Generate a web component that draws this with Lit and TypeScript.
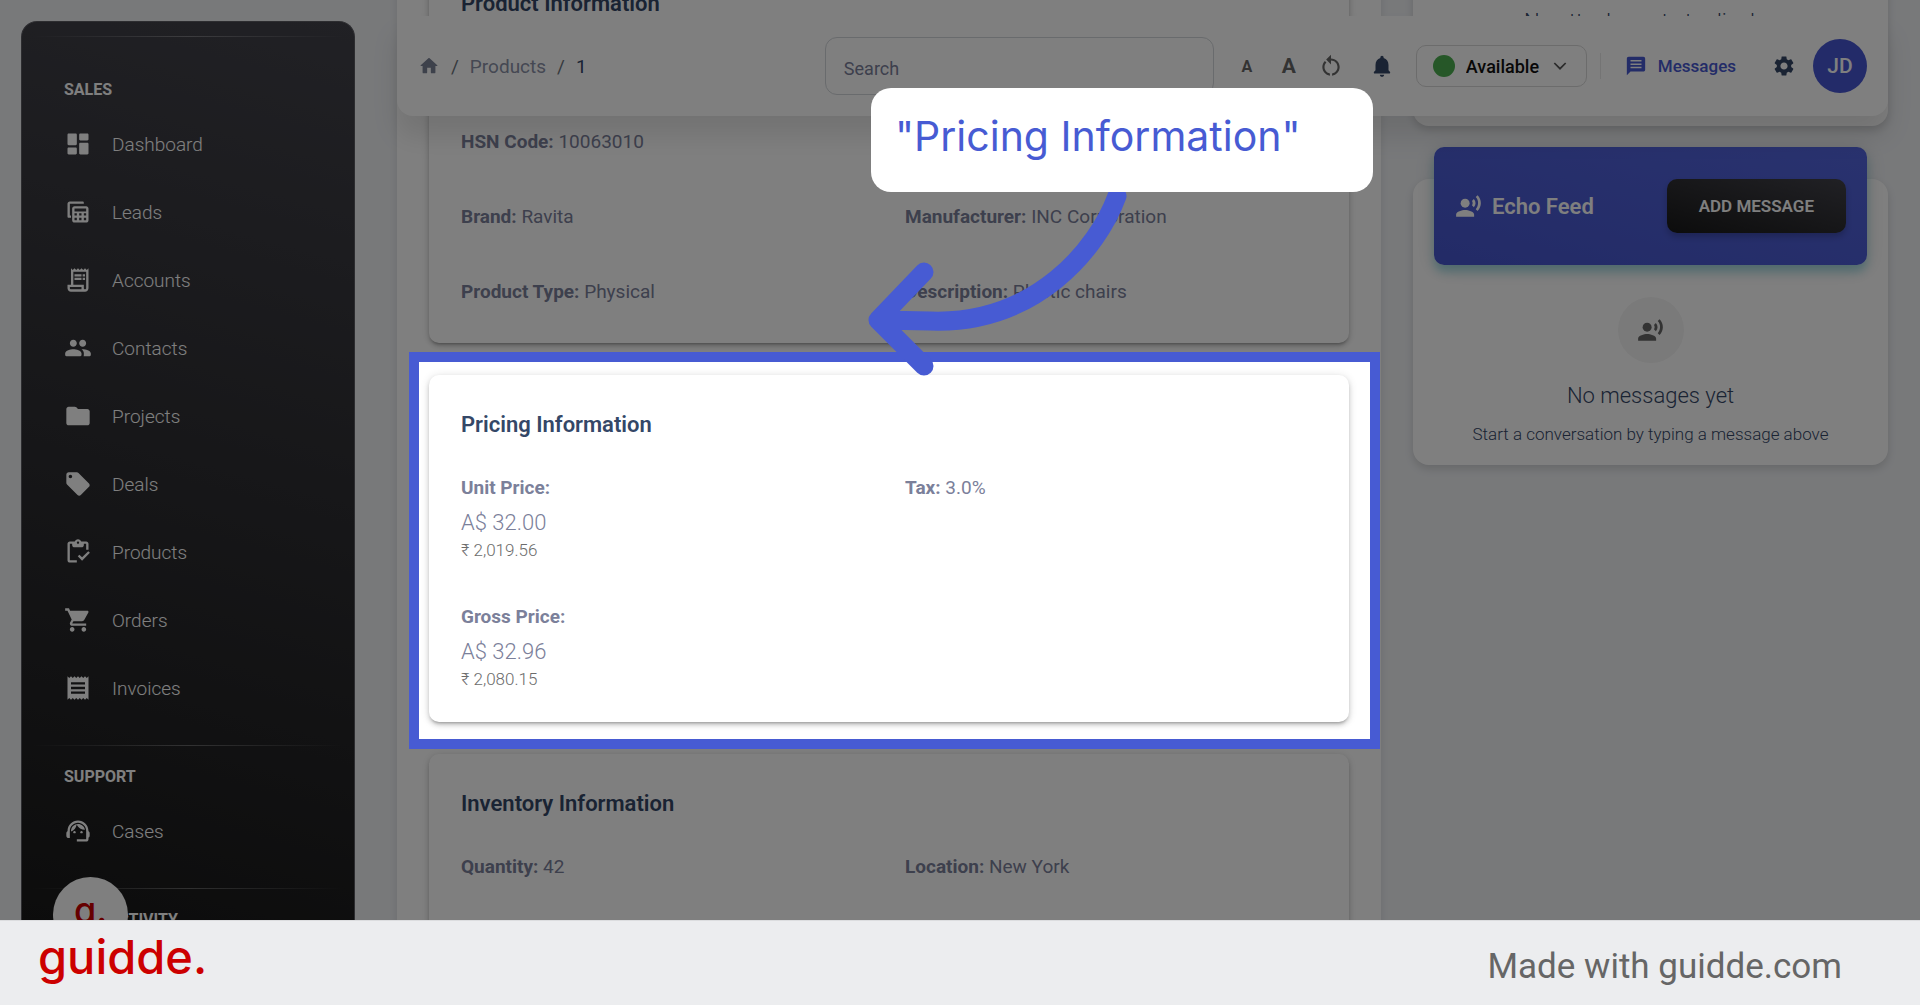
import { LitElement, html, css, svg, nothing } from "lit";
import { customElement } from "lit/decorators.js";

const ICONS: Record<string, unknown> = {
  dashboard: svg`<path d="M4 13h6c.55 0 1-.45 1-1V4c0-.55-.45-1-1-1H4c-.55 0-1 .45-1 1v8c0 .55.45 1 1 1zm0 8h6c.55 0 1-.45 1-1v-4c0-.55-.45-1-1-1H4c-.55 0-1 .45-1 1v4c0 .55.45 1 1 1zm10 0h6c.55 0 1-.45 1-1v-8c0-.55-.45-1-1-1h-6c-.55 0-1 .45-1 1v8c0 .55.45 1 1 1zM13 4v4c0 .55.45 1 1 1h6c.55 0 1-.45 1-1V4c0-.55-.45-1-1-1h-6c-.55 0-1 .45-1 1z"/>`,
  leads: svg`<path d="M17 5V4c0-.55-.45-1-1-1H5c-1.100 0-2 .9-2 2v11c0 .55.45 1 1 1h2v-2H5V5z"/><path fill-rule="evenodd" d="M9 7h10c1.100 0 2 .9 2 2v10c0 1.100-.9 2-2 2H9c-1.100 0-2-.9-2-2V9c0-1.100.9-2 2-2zm0 2v2.500h10V9zm0 4v2h2v-2zm4 0v2h2v-2zm4 0v2h2v-2zm-8 4v2h2v-2zm4 0v2h2v-2zm4 0v2h2v-2z"/>`,
  accounts: svg`<path d="M19.500 3.500 18 2l-1.500 1.500L15 2l-1.500 1.500L12 2l-1.500 1.500L9 2 7.500 3.500 6 2v14H3v3c0 1.660 1.340 3 3 3h12c1.660 0 3-1.340 3-3V2l-1.500 1.500zM15 20H6c-.55 0-1-.45-1-1v-1h10v2zm4-1c0 .55-.45 1-1 1s-1-.45-1-1v-3H8V5h11v14z"/><path d="M9 7h6v2H9zM16 7h2v2h-2zM9 10h6v2H9zM16 10h2v2h-2z"/>`,
  contacts: svg`<path d="M16 11c1.660 0 2.990-1.340 2.990-3S17.660 5 16 5s-3 1.340-3 3 1.340 3 3 3zm-8 0c1.660 0 2.990-1.340 2.990-3S9.660 5 8 5 5 6.340 5 8s1.340 3 3 3zm0 2c-2.330 0-7 1.170-7 3.500V18c0 .55.45 1 1 1h12c.55 0 1-.45 1-1v-1.500c0-2.330-4.670-3.500-7-3.500zm8 0c-.29 0-.62.020-.97.050 1.160.84 1.970 1.970 1.970 3.450V18c0 .35-.07.69-.18 1H22c.55 0 1-.45 1-1v-1.500c0-2.330-4.670-3.500-7-3.500z"/>`,
  projects: svg`<path d="M10.590 4.590C10.210 4.210 9.700 4 9.170 4H4c-1.100 0-1.990.9-1.990 2L2 18c0 1.100.9 2 2 2h16c1.100 0 2-.9 2-2V8c0-1.100-.9-2-2-2h-8l-1.410-1.410z"/>`,
  deals: svg`<path d="m21.410 11.580-9-9C12.050 2.220 11.550 2 11 2H4c-1.100 0-2 .9-2 2v7c0 .55.220 1.050.59 1.420l9 9c.36.36.86.58 1.410.58s1.050-.22 1.410-.59l7-7c.37-.36.59-.86.59-1.410s-.23-1.060-.59-1.420zM5.500 7C4.670 7 4 6.330 4 5.500S4.670 4 5.500 4 7 4.670 7 5.500 6.330 7 5.500 7z"/>`,
  products: svg`<path d="M5 5h2v1c0 1.100.9 2 2 2h6c1.100 0 2-.9 2-2V5h2v5h2V5c0-1.100-.9-2-2-2h-4.180C14.400 1.840 13.300 1 12 1s-2.400.84-2.820 2H5c-1.100 0-2 .9-2 2v14c0 1.100.9 2 2 2h6v-2H5V5zm7-2c.55 0 1 .45 1 1s-.45 1-1 1-1-.45-1-1 .45-1 1-1z"/><path d="M20.800 11.300 15.500 16.600l-2.300-2.300-1.400 1.400 3.700 3.700 6.700-6.700z"/>`,
  orders: svg`<path d="M7 18c-1.100 0-1.990.9-1.990 2S5.900 22 7 22s2-.9 2-2-.9-2-2-2zM1 2v2h2l3.600 7.590-1.350 2.450c-.16.28-.25.61-.25.96 0 1.100.9 2 2 2h12v-2H7.420c-.14 0-.25-.11-.25-.25l.03-.12.9-1.630h7.450c.75 0 1.410-.41 1.750-1.030l3.580-6.490c.08-.14.12-.31.12-.48 0-.55-.45-1-1-1H5.210l-.94-2H1zm16 16c-1.100 0-1.990.9-1.990 2s.89 2 1.990 2 2-.9 2-2-.9-2-2-2z"/>`,
  invoices: svg`<path d="M18 17H6v-2h12v2zm0-4H6v-2h12v2zm0-4H6V7h12v2zM3 22l1.500-1.500L6 22l1.500-1.500L9 22l1.500-1.500L12 22l1.500-1.500L15 22l1.500-1.500L18 22l1.500-1.500L21 22V2l-1.500 1.500L18 2l-1.500 1.500L15 2l-1.500 1.500L12 2l-1.500 1.500L9 2 7.500 3.500 6 2 4.500 3.500 3 2v20z"/>`,
  cases: svg`<path d="M21 12.220C21 6.730 16.740 3 12 3c-4.690 0-9 3.650-9 9.280-.6.340-1 .98-1 1.720v2c0 1.100.9 2 2 2h1v-6.100c0-3.870 3.130-7 7-7s7 3.130 7 7V19h-8v2h8c1.100 0 2-.9 2-2v-1.220c.59-.31 1-.92 1-1.640v-2.300c0-.7-.41-1.310-1-1.620z"/><circle cx="9" cy="13" r="1"/><circle cx="15" cy="13" r="1"/><path d="M18 11.030C17.520 8.180 15.040 6 12.050 6c-3.030 0-6.290 2.510-6.030 6.450 2.470-1.010 4.330-3.210 4.860-5.890 1.310 2.630 4 4.440 7.120 4.470z"/>`,
  home: svg`<path d="M10 19v-5h4v5c0 .55.45 1 1 1h3c.55 0 1-.45 1-1v-7h1.700c.46 0 .68-.57.33-.87L12.670 3.600c-.38-.34-.96-.34-1.340 0l-8.360 7.530c-.34.3-.13.87.33.87H5v7c0 .55.45 1 1 1h3c.55 0 1-.45 1-1z"/>`,
  reset: svg`<path d="M12 5V1.500L7.500 6l4.500 4.500V7c3.300 0 6 2.700 6 6 0 2.970-2.170 5.430-5 5.910v2.020c3.950-.49 7-3.850 7-7.930 0-4.420-3.580-8-8-8zM6 13c0-1.650.67-3.150 1.760-4.240L6.340 7.340C4.900 8.790 4 10.790 4 13c0 4.080 3.050 7.440 7 7.930v-2.020c-2.830-.48-5-2.940-5-5.910z"/>`,
  bell: svg`<path d="M12 22c1.100 0 2-.9 2-2h-4c0 1.100.89 2 2 2zm6-6v-5c0-3.070-1.640-5.640-4.500-6.320V4c0-.83-.67-1.500-1.500-1.500s-1.500.67-1.500 1.500v.68C7.630 5.360 6 7.920 6 11v5l-1.300 1.290c-.63.63-.19 1.710.7 1.710h13.170c.89 0 1.340-1.080.71-1.710L18 16z"/>`,
  message: svg`<path fill-rule="evenodd" d="M4 2h16c1.100 0 2 .9 2 2v12c0 1.100-.9 2-2 2H6l-4 4V4c0-1.100.9-2 2-2zm2 3.500v1.700h12V5.500zm0 3.700v1.600h12V9.200zm0 3.600v1.700h12v-1.700z"/>`,
  gear: svg`<path d="M19.140 12.940c.04-.3.06-.61.06-.94 0-.32-.02-.64-.07-.94l2.030-1.580c.18-.14.23-.41.12-.61l-1.920-3.320c-.12-.22-.37-.29-.59-.22l-2.390.96c-.5-.38-1.030-.7-1.620-.94L14.400 2.810c-.04-.24-.24-.41-.48-.41h-3.840c-.24 0-.43.170-.47.410L9.250 5.350C8.660 5.590 8.120 5.920 7.630 6.290L5.240 5.330c-.22-.08-.47 0-.59.220L2.740 8.870c-.12.210-.08.470.12.610l2.030 1.580C4.840 11.360 4.800 11.690 4.800 12s.02.640.07.940l-2.030 1.580c-.18.14-.23.410-.12.610l1.920 3.320c.12.220.37.290.59.220l2.390-.96c.5.380 1.030.7 1.620.94l.36 2.540c.05.240.24.410.48.410h3.840c.24 0 .44-.170.47-.410l.36-2.540c.59-.24 1.130-.56 1.620-.94l2.390.96c.22.080.47 0 .59-.220l1.920-3.320c.12-.220.07-.470-.12-.610l-2.010-1.580zM12 15.600c-1.980 0-3.600-1.620-3.600-3.600s1.620-3.600 3.600-3.600 3.600 1.620 3.600 3.600-1.620 3.600-3.600 3.600z"/>`,
  chevron: svg`<path d="M3.500 7.500 12 16l8.500-8.500" fill="none" stroke="currentColor" stroke-width="2.600"/>`,
  voice: svg`<circle cx="9" cy="9" r="4"/><path d="M9 15c-2.670 0-8 1.340-8 4v2h16v-2c0-2.660-5.330-4-8-4zM16.760 5.360l-1.680 1.690c.84 1.180.84 2.710 0 3.890l1.680 1.690c2.020-2.020 2.020-5.070 0-7.270zM20.070 2l-1.630 1.630c2.770 3.020 2.770 7.560 0 10.740L20.070 16c3.900-3.890 3.910-9.950 0-14z"/>`,
};

const icon = (name: string, cls = "icon") =>
  html`<svg class=${cls} viewBox="0 0 24 24" fill="currentColor" aria-hidden="true">${ICONS[name]}</svg>`;

const SECTIONS = [
  {
    title: "Sales",
    items: [
      ["dashboard", "Dashboard"],
      ["leads", "Leads"],
      ["accounts", "Accounts"],
      ["contacts", "Contacts"],
      ["projects", "Projects"],
      ["deals", "Deals"],
      ["products", "Products"],
      ["orders", "Orders"],
      ["invoices", "Invoices"],
    ],
  },
  { title: "Support", items: [["cases", "Cases"]] },
  { title: "User Activity", items: [] },
];

const field = (label: string, value: string) =>
  html`<div class="field"><dt>${label}:</dt> <dd>${value}</dd></div>`;

const blank = () => html`<div class="field"></div>`;

const price = (label: string, amount: string, converted: string) => html`
  <div class="field price">
    <dt>${label}:</dt>
    <dd class="amount">${amount}</dd>
    <dd class="converted">${converted}</dd>
  </div>
`;

@customElement("app-sidebar")
export class AppSidebar extends LitElement {
  static styles = css`
    :host {
      display: block;
      box-sizing: border-box;
      padding-top: 14px;
      border-radius: 16px 16px 0 0;
      border: 1px solid #5a5a60;
      border-bottom: 0;
      background: linear-gradient(195deg, #42424a, #191919);
      color: #fff;
    }
    .rule {
      height: 1px;
      margin: 23px 10px 21px;
      border: 0;
      background: linear-gradient(90deg, transparent, rgba(255, 255, 255, 0.3), transparent);
    }
    .section:first-child .rule {
      margin: 0 10px 43px;
    }
    h2 {
      margin: 0 0 10px;
      padding-left: 42px;
      font-size: 16px;
      line-height: 20px;
      font-weight: 700;
      text-transform: uppercase;
    }
    ul {
      margin: 0;
      padding: 0;
      list-style: none;
    }
    a {
      display: flex;
      align-items: center;
      gap: 20px;
      height: 68px;
      padding-left: 42px;
      color: inherit;
      font-size: 19px;
      font-weight: 300;
      text-decoration: none;
    }
    .icon {
      width: 28px;
      height: 28px;
    }
  `;

  render() {
    return html`
      ${SECTIONS.map(
        (s) => html`<section class="section">
          <hr class="rule" />
          <h2>${s.title}</h2>
          ${s.items.length
            ? html`<ul>
                ${s.items.map(([i, label]) => html`<li><a href="#">${icon(i)}${label}</a></li>`)}
              </ul>`
            : nothing}
        </section>`,
      )}
    `;
  }
}

@customElement("app-topbar")
export class AppTopbar extends LitElement {
  static styles = css`
    :host {
      display: flex;
      align-items: center;
      box-sizing: border-box;
      height: 100px;
      padding: 0 21px;
      border-radius: 0 0 16px 16px;
      background: #fff;
      box-shadow: 0 20px 27px rgba(0, 0, 0, 0.1);
      color: #344767;
      font-size: 18px;
    }
    .crumbs {
      display: flex;
      align-items: center;
      gap: 11px;
      flex: 1;
      color: #6c757d;
      font-size: 19px;
    }
    .crumbs a {
      display: flex;
      color: #8a90a6;
      text-decoration: none;
    }
    .here {
      color: #344767;
    }
    .home {
      width: 22px;
      height: 22px;
      color: #7b8296;
    }
    .search {
      box-sizing: border-box;
      width: 389px;
      height: 58px;
      margin-right: 20px;
      padding: 4px 18px 0;
      border: 1px solid #d2d6da;
      border-radius: 12px;
      background: transparent;
      font: inherit;
    }
    .search::placeholder {
      color: #7b809a;
      opacity: 1;
    }
    button {
      display: flex;
      align-items: center;
      justify-content: center;
      padding: 0;
      border: 0;
      background: none;
      color: #666;
      font: inherit;
      font-weight: 700;
      cursor: pointer;
    }
    .tool {
      width: 42px;
      height: 42px;
    }
    .small {
      width: 26px;
      margin-right: 8px;
      font-size: 16px;
    }
    .large {
      font-size: 21px;
    }
    .tool .icon {
      width: 26px;
      height: 26px;
    }
    .alerts {
      width: 60px;
      color: #344767;
    }
    .status {
      display: flex;
      align-items: center;
      box-sizing: border-box;
      height: 42px;
      margin-left: 4px;
      padding: 0 18px 0 16px;
      border: 1px solid #d8d8d8;
      border-radius: 10px;
      color: #555;
    }
    .dot {
      width: 22px;
      height: 22px;
      margin-right: 11px;
      border-radius: 50%;
      background: #4caf50;
    }
    select {
      appearance: none;
      margin: 0 12px 0 0;
      padding: 0;
      border: 0;
      background: none;
      color: #111;
      font: inherit;
      font-weight: 500;
    }
    .chevron {
      width: 16px;
      height: 16px;
    }
    .sep {
      width: 1px;
      height: 26px;
      margin: 0 24px 0 13px;
      background: #e8e8e8;
    }
    .messages {
      display: flex;
      align-items: center;
      gap: 11px;
      color: #4758d0;
      font-size: 17px;
      font-weight: 500;
      text-decoration: none;
    }
    .messages .icon {
      width: 22px;
      height: 22px;
    }
    .settings {
      width: 24px;
      margin: 0 17px 0 36px;
      color: #344767;
    }
    .settings .icon {
      width: 24px;
      height: 24px;
    }
    .avatar {
      width: 54px;
      height: 54px;
      border-radius: 50%;
      background: #4656d2;
      color: #fff;
      font-size: 21px;
      font-weight: 500;
    }
  `;

  render() {
    return html`
      <nav class="crumbs" aria-label="Breadcrumb">
        <a href="#" aria-label="Home">${icon("home", "home")}</a>
        <span>/</span><a href="#">Products</a><span>/</span><span class="here">1</span>
      </nav>
      <input class="search" type="search" placeholder="Search" aria-label="Search" />
      <button class="tool small" aria-label="Smaller text">A</button>
      <button class="tool large" aria-label="Larger text">A</button>
      <button class="tool" aria-label="Reset text size">${icon("reset")}</button>
      <button class="tool alerts" aria-label="Notifications">${icon("bell")}</button>
      <label class="status">
        <span class="dot"></span>
        <select aria-label="Status">
          <option>Available</option>
        </select>
        ${icon("chevron", "chevron")}
      </label>
      <span class="sep"></span>
      <a class="messages" href="#">${icon("message")}Messages</a>
      <button class="settings" aria-label="Settings">${icon("gear")}</button>
      <button class="avatar">JD</button>
    `;
  }
}

@customElement("app-root")
export class AppRoot extends LitElement {
  static styles = css`
    :host {
      display: flex;
      flex-direction: column;
      height: 100vh;
      overflow: hidden;
      background: #f0f2f5;
      color: #7b809a;
      font-family: Roboto, "Noto Sans", sans-serif;
    }
    .stage {
      position: relative;
      display: flex;
      gap: 42px;
      flex: 1;
      min-height: 0;
      padding: 0 32px 0 21px;
      overflow: hidden;
    }
    app-sidebar {
      flex: 0 0 334px;
      margin-top: 21px;
    }
    .workspace {
      position: relative;
      flex: 1;
      display: grid;
      grid-template-columns: minmax(0, 1fr) 475px;
      gap: 32px;
    }
    app-topbar {
      position: absolute;
      z-index: 2;
      top: 16px;
      left: 0;
      right: 0;
    }
    .details {
      display: flex;
      flex-direction: column;
      gap: 32px;
      height: max-content;
      margin-top: -46px;
      padding: 0 32px;
      background: #fff;
      box-shadow: 0 4px 8px rgba(0, 0, 0, 0.1);
    }
    .card {
      position: relative;
      padding: 32px;
      border-radius: 10px;
      background: #fff;
      box-shadow:
        0 3px 3px -2px rgba(0, 0, 0, 0.25),
        0 3px 5px rgba(0, 0, 0, 0.16),
        0 1px 10px rgba(0, 0, 0, 0.12);
    }
    .card h2 {
      margin: 0 0 30px;
      color: #344767;
      font-size: 22px;
      line-height: 36px;
      font-weight: 600;
    }
    .fields {
      display: grid;
      grid-template-columns: 1fr 1fr;
      gap: 41px 32px;
      margin: 0;
      font-size: 19px;
      line-height: 30px;
    }
    .field {
      min-height: 34px;
    }
    dt,
    dd {
      display: inline;
      margin: 0;
    }
    dt {
      font-weight: 700;
    }
    .price dt,
    .price dd {
      display: block;
    }
    .amount {
      padding-top: 4px;
      font-size: 22px;
      line-height: 32px;
      font-weight: 300;
    }
    .converted {
      color: #6c6c6c;
      font-size: 17px;
      line-height: 22px;
      font-weight: 300;
    }
    .aside {
      display: flex;
      flex-direction: column;
      gap: 53px;
      margin-top: -32px;
    }
    .panel {
      padding: 0 21px;
      border-radius: 16px;
      background: #fff;
      box-shadow: 0 4px 8px rgba(0, 0, 0, 0.14);
      color: #344767;
      text-align: center;
    }
    .files {
      height: 118px;
      padding-top: 40px;
      font-size: 22px;
      line-height: 28px;
      font-weight: 300;
    }
    .feed-head {
      display: flex;
      align-items: center;
      gap: 10px;
      margin-top: -32px;
      padding: 32px 21px;
      border-radius: 10px;
      background: linear-gradient(195deg, #5365de, #4656ce);
      box-shadow:
        0 4px 20px rgba(0, 0, 0, 0.14),
        0 7px 10px rgba(0, 187, 212, 0.3);
      color: #fff;
    }
    .feed-head h2 {
      flex: 1;
      margin: 0;
      font-size: 22px;
      font-weight: 600;
      text-align: left;
    }
    .feed-head button {
      height: 54px;
      padding: 0 32px;
      border: 0;
      border-radius: 10px;
      background: linear-gradient(195deg, #42424a, #191919);
      box-shadow: 0 4px 6px rgba(0, 0, 0, 0.2);
      color: #fff;
      font: inherit;
      font-size: 17px;
      font-weight: 600;
      text-transform: uppercase;
    }
    .voice {
      width: 27px;
      height: 27px;
    }
    .badge {
      display: flex;
      align-items: center;
      justify-content: center;
      width: 66px;
      height: 66px;
      margin: 32px auto 18px;
      border-radius: 50%;
      background: #f4f4f4;
      color: #666;
    }
    .empty {
      margin: 0;
      font-size: 22px;
      line-height: 30px;
      font-weight: 300;
    }
    .hint {
      margin: 0;
      padding: 12px 0 20px;
      font-size: 17px;
      line-height: 22px;
      font-weight: 300;
    }
    .widget {
      position: absolute;
      z-index: 3;
      left: 53px;
      bottom: -32px;
      width: 75px;
      height: 75px;
      border-radius: 50%;
      background: #fff;
      color: #c00;
      font: 500 36px/66px Inter, sans-serif;
      text-align: center;
    }
    .spotlight {
      position: absolute;
      z-index: 10;
      inset: -23px -31px -27px -20px;
      border: 10px solid #475bd3;
      box-shadow: 0 0 0 3000px rgba(0, 0, 0, 0.5);
      pointer-events: none;
    }
    .arrow {
      position: absolute;
      z-index: 11;
      left: 436px;
      top: -190px;
      width: 270px;
      height: 195px;
    }
    .callout {
      position: absolute;
      z-index: 12;
      left: 442px;
      top: -287px;
      box-sizing: border-box;
      width: 502px;
      height: 104px;
      padding-left: 24px;
      border-radius: 20px;
      background: #fff;
      color: #475bd3;
      font: 400 41px/96px Inter, sans-serif;
    }
    .footer {
      display: flex;
      align-items: center;
      justify-content: space-between;
      box-sizing: border-box;
      height: 85px;
      padding: 6px 78px 0 38px;
      border-top: 1px solid #dcdddf;
      background: #ecedef;
      color: #666;
      font-size: 35px;
    }
    .brand {
      padding-bottom: 18px;
      color: #c00;
      font: 500 47px/50px Inter, sans-serif;
    }
  `;

  render() {
    return html`
      <div class="stage">
        <app-sidebar></app-sidebar>
        <main class="workspace">
          <app-topbar></app-topbar>
          <div class="details">
            <section class="card">
              <h2>Product Information</h2>
              <dl class="fields">
                ${blank()} ${blank()}
                ${field("HSN Code", "10063010")} ${blank()}
                ${field("Brand", "Ravita")} ${field("Manufacturer", "INC Corporation")}
                ${field("Product Type", "Physical")} ${field("Description", "Plastic chairs")}
              </dl>
            </section>
            <section class="card">
              <h2>Pricing Information</h2>
              <dl class="fields">
                ${price("Unit Price", "A$ 32.00", "₹ 2,019.56")} ${field("Tax", "3.0%")}
                ${price("Gross Price", "A$ 32.96", "₹ 2,080.15")}
              </dl>
              <div class="spotlight"></div>
              <svg class="arrow" viewBox="865 185 270 195" fill="none" stroke="#475bd3" stroke-width="19" stroke-linecap="round" stroke-linejoin="round" aria-hidden="true">
                <path d="M1117 196C1098 248 1036 325 930 321L878 320M924 272 878 320 924 366" />
              </svg>
              <div class="callout">"Pricing Information"</div>
            </section>
            <section class="card">
              <h2>Inventory Information</h2>
              <dl class="fields">
                ${field("Quantity", "42")} ${field("Location", "New York")}
                ${blank()} ${blank()}
              </dl>
            </section>
          </div>
          <div class="aside">
            <section class="panel files">No attachments to display</section>
            <section class="panel">
              <div class="feed-head">
                ${icon("voice", "voice")}
                <h2>Echo Feed</h2>
                <button>Add message</button>
              </div>
              <div class="badge">${icon("voice", "voice")}</div>
              <p class="empty">No messages yet</p>
              <p class="hint">Start a conversation by typing a message above</p>
            </section>
          </div>
        </main>
        <div class="widget">g.</div>
      </div>
      <footer class="footer">
        <span class="brand">guidde.</span>
        <span>Made with guidde.com</span>
      </footer>
    `;
  }
}
